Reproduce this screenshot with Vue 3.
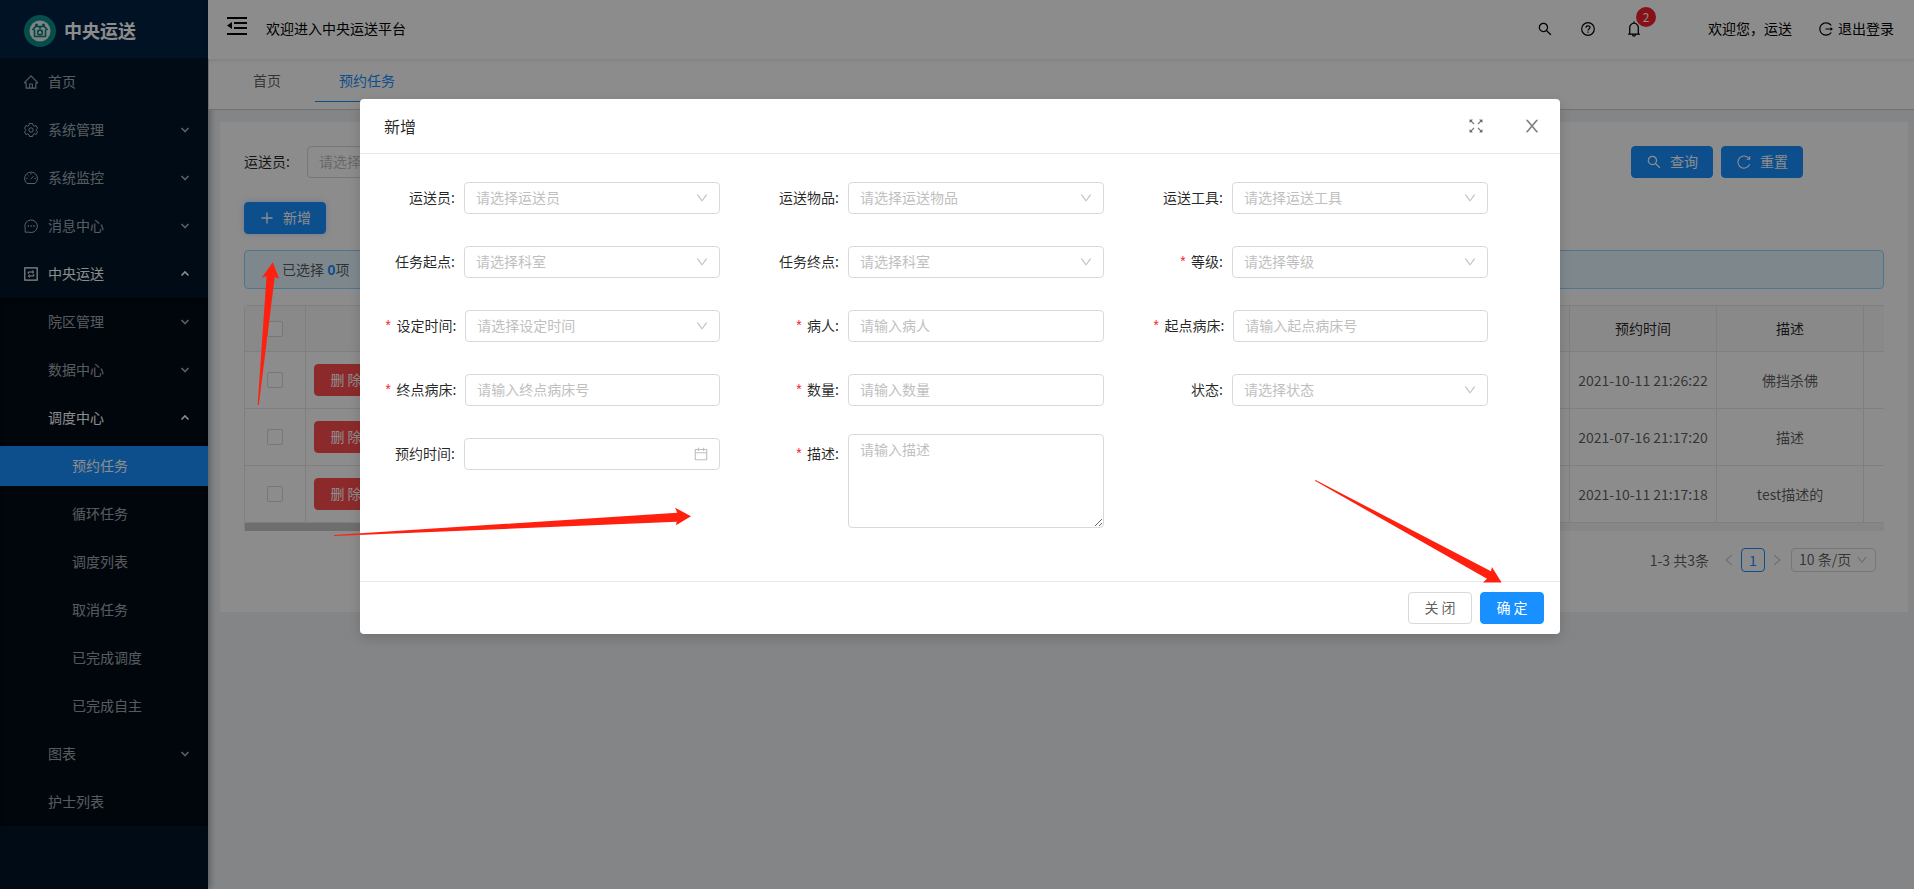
<script setup>
const icons = {
  search: 'M909.6 854.5L649.9 594.8C690.2 542.7 712 479 712 412c0-80.2-31.3-155.4-87.9-212.1-56.6-56.7-132-87.9-212.1-87.9s-155.5 31.3-212.1 87.9C143.2 256.5 112 331.8 112 412c0 80.1 31.3 155.5 87.9 212.1C256.5 680.8 331.8 712 412 712c67 0 130.6-21.8 182.7-62l259.7 259.6a8.2 8.2 0 0 0 11.6 0l43.6-43.5a8.2 8.2 0 0 0 0-11.6zM570.4 570.4C528 612.7 471.8 636 412 636s-116-23.3-158.4-65.6C211.3 528 188 471.8 188 412s23.3-116.1 65.6-158.4C296 211.3 352.2 188 412 188s116.1 23.2 158.4 65.6S636 352.2 636 412s-23.3 116.1-65.6 158.4z',
  down: 'M884 256h-75c-5.1 0-9.9 2.5-12.9 6.6L512 654.2 227.9 262.6c-3-4.1-7.8-6.6-12.9-6.6h-75c-6.5 0-10.3 7.4-6.5 12.7l352.6 486.1c12.8 17.6 39 17.6 51.7 0l352.6-486.1c3.9-5.3.1-12.7-6.4-12.7z',
  close: 'M563.8 512l262.5-312.9c4.4-5.2.7-13.1-6.1-13.1h-79.8c-4.7 0-9.2 2.1-12.3 5.7L511.6 449.8 295.1 191.7c-3-3.6-7.5-5.7-12.3-5.7H203c-6.8 0-10.5 7.9-6.1 13.1L459.4 512 196.9 824.9A7.95 7.95 0 0 0 203 838h79.8c4.7 0 9.2-2.1 12.3-5.7l216.5-258.1 216.5 258.1c3 3.6 7.5 5.7 12.3 5.7h79.8c6.8 0 10.5-7.9 6.1-13.1L563.8 512z',
  home: 'M946.5 505L560.1 118.8l-25.9-25.9a31.5 31.5 0 0 0-44.4 0L77.5 505a63.9 63.9 0 0 0-18.8 46c.4 35.2 29.7 63.3 64.9 63.3h42.5V940h691.8V614.3h43.4c17.1 0 33.2-6.7 45.3-18.8a63.6 63.6 0 0 0 18.7-45.3c0-17-6.7-33.1-18.8-45.2zM568 868H456V664h112v204zm217.9-325.7V868H632V640c0-22.1-17.9-40-40-40H432c-22.1 0-40 17.9-40 40v228H238.1V542.3h-96l370-369.7 23.1 23.1L882 542.3h-96.1z',
  calendar: 'M880 184H712v-64c0-4.4-3.6-8-8-8h-56c-4.4 0-8 3.6-8 8v64H384v-64c0-4.4-3.6-8-8-8h-56c-4.4 0-8 3.6-8 8v64H144c-17.7 0-32 14.3-32 32v664c0 17.7 14.3 32 32 32h736c17.7 0 32-14.3 32-32V216c0-17.7-14.3-32-32-32zm-40 656H184V460h656v380zM184 392V256h128v48c0 4.4 3.6 8 8 8h56c4.4 0 8-3.6 8-8v-48h256v48c0 4.4 3.6 8 8 8h56c4.4 0 8-3.6 8-8v-48h128v136H184z',
  bell: 'M816 768h-24V428c0-141.1-104.3-257.8-240-277.2V112c0-22.1-17.9-40-40-40s-40 17.9-40 40v38.8C336.3 170.2 232 286.9 232 428v340h-24c-17.7 0-32 14.3-32 32v32c0 4.4 3.6 8 8 8h216c0 61.8 50.2 112 112 112s112-50.2 112-112h216c4.4 0 8-3.6 8-8v-32c0-17.7-14.3-32-32-32zM512 888c-26.5 0-48-21.5-48-48h96c0 26.5-21.5 48-48 48zM304 768V428c0-55.6 21.6-107.8 60.9-147.1S456.4 220 512 220c55.6 0 107.8 21.6 147.1 60.9S720 372.4 720 428v340H304z',
  logout: 'M868 732h-70.3c-4.8 0-9.3 2.1-12.3 5.8-7 8.5-14.5 16.7-22.4 24.5a353.84 353.84 0 0 1-112.7 75.9A352.8 352.8 0 0 1 512.4 866c-47.9 0-94.3-9.4-137.9-27.8a353.84 353.84 0 0 1-112.7-75.9 353.28 353.28 0 0 1-76-112.5C167.3 606.2 158 559.9 158 512s9.4-94.2 27.8-137.8c17.8-42.1 43.4-80 76-112.5s70.5-58.1 112.7-75.9c43.6-18.4 90-27.8 137.9-27.8 47.9 0 94.3 9.3 137.9 27.8 42.2 17.8 80.1 43.4 112.7 75.9 7.9 7.9 15.3 16.1 22.4 24.5 3 3.7 7.6 5.8 12.3 5.8H868c6.3 0 10.2-7 6.7-12.3C798 160.5 663.8 81.6 511.3 82 271.7 82.6 79.6 277.1 82 516.4 84.4 751.9 276.2 942 512.4 942c152.1 0 285.7-78.8 362.3-197.7 3.4-5.3-.4-12.3-6.7-12.3zm88.9-226.3L815 393.7c-5.3-4.2-13-.4-13 6.3v76H488c-4.4 0-8 3.6-8 8v56c0 4.4 3.6 8 8 8h314v76c0 6.7 7.8 10.5 13 6.3l141.9-112a8 8 0 0 0 0-12.6z',
}

const menu = [
  { text: '首页', icon: 'home' },
  { text: '系统管理', icon: 'setting', arrow: 'down' },
  { text: '系统监控', icon: 'dashboard', arrow: 'down' },
  { text: '消息中心', icon: 'message', arrow: 'down' },
  { text: '中央运送', icon: 'transfer', arrow: 'up', open: true },
]

const subMenu = [
  { text: '院区管理', level: 2, arrow: 'down' },
  { text: '数据中心', level: 2, arrow: 'down' },
  { text: '调度中心', level: 2, arrow: 'up', open: true },
  { text: '预约任务', level: 3, selected: true },
  { text: '循环任务', level: 3 },
  { text: '调度列表', level: 3 },
  { text: '取消任务', level: 3 },
  { text: '已完成调度', level: 3 },
  { text: '已完成自主', level: 3 },
  { text: '图表', level: 2, arrow: 'down' },
  { text: '护士列表', level: 2 },
]

const chevron = { up: 'M1.5 5.5L5 2l3.500 3.500', down: 'M1.500 2L5 5.500 8.500 2' }

const rows = [
  { time: '2021-10-11 21:26:22', desc: '佛挡杀佛' },
  { time: '2021-07-16 21:17:20', desc: '描述' },
  { time: '2021-10-11 21:17:18', desc: 'test描述的' },
]

const fields = [
  { id: 'courier', label: '运送员', type: 'select', hint: '请选择运送员' },
  { id: 'goods', label: '运送物品', type: 'select', hint: '请选择运送物品' },
  { id: 'tool', label: '运送工具', type: 'select', hint: '请选择运送工具' },
  { id: 'from', label: '任务起点', type: 'select', hint: '请选择科室' },
  { id: 'to', label: '任务终点', type: 'select', hint: '请选择科室' },
  { id: 'grade', label: '等级', type: 'select', hint: '请选择等级', required: true },
  { id: 'settime', label: '设定时间', type: 'select', hint: '请选择设定时间', required: true },
  { id: 'patient', label: '病人', type: 'input', hint: '请输入病人', required: true },
  { id: 'frombed', label: '起点病床', type: 'input', hint: '请输入起点病床号', required: true },
  { id: 'tobed', label: '终点病床', type: 'input', hint: '请输入终点病床号', required: true },
  { id: 'amount', label: '数量', type: 'input', hint: '请输入数量', required: true },
  { id: 'status', label: '状态', type: 'select', hint: '请选择状态' },
  { id: 'booktime', label: '预约时间', type: 'date', hint: '' },
  { id: 'desc', label: '描述', type: 'textarea', hint: '请输入描述', required: true },
]
</script>

<template>
  <div class="app">
    <aside class="sider">
      <div class="logo">
        <svg class="logo-mark" viewBox="0 0 32 32" aria-hidden="true">
          <circle cx="16" cy="16" r="16" fill="#0a8f8a" />
          <circle cx="16" cy="16" r="10.5" fill="#e4eeee" />
          <g fill="none" stroke="#0a7f7a" stroke-width="1.6" stroke-linejoin="round">
            <path d="M10.500 14.500v7h11v-7M8.500 15l3-3.500h9l3 3.500" />
            <circle cx="16" cy="17.500" r="2.400" />
          </g>
          <g fill="#0a7f7a">
            <circle cx="12.500" cy="10" r="1.500" />
            <circle cx="19.500" cy="10" r="1.500" />
            <circle cx="16" cy="12.500" r="1.200" />
          </g>
        </svg>
        <h1>中央运送</h1>
      </div>
      <nav>
        <a v-for="m in menu" :key="m.text" href="#" class="item" :class="{ open: m.open }">
          <span v-if="m.icon === 'home'" class="slot"><svg class="ico lg" viewBox="0 0 1024 1024" fill="currentColor"><path :d="icons.home" /></svg></span>
          <svg v-else class="ico" viewBox="0 0 14 14" fill="none" stroke="currentColor">
            <template v-if="m.icon === 'setting'">
              <path stroke-linejoin="round" d="M5.5 .5h3l.5 1.800 1.300.8 1.800-.5 1.400 2.600-1.200 1.300v1l1.200 1.300-1.400 2.600-1.800-.5-1.300.8-.5 1.800h-3L5 11.700l-1.300-.8-1.800.5L.5 8.800l1.200-1.300v-1L.5 5.200l1.400-2.600 1.800.5L5 2.300z" />
              <circle cx="7" cy="7" r="2.200" />
            </template>
            <template v-else-if="m.icon === 'dashboard'">
              <path d="M3 12.500a6.400 6.400 0 1 1 8 0z" stroke-linejoin="round" />
              <path d="M6.600 8.200l3-3M7 2.200v1.300M2.200 7.400h1.300M10.500 7.400h1.300M3.600 4l.9.900" />
            </template>
            <template v-else-if="m.icon === 'message'">
              <path d="M1.200 13.200V9.500A6.300 6.300 0 1 1 5 13.200z" stroke-linejoin="round" />
              <path d="M3.600 7h1.300M6.400 7h1.300M9.200 7h1.300" stroke-width="1.300" />
            </template>
            <template v-else>
              <path d="M.8 .8h12.400v12.400H.8z" stroke-width="1.200" />
              <path d="M4.300 6.800V5h5.200M8.200 3.600L9.700 5 8.200 6.300M9.700 7.200V9H4.500M5.800 7.700L4.300 9l1.500 1.400" />
            </template>
          </svg>
          <span class="text">{{ m.text }}</span>
          <svg v-if="m.arrow" class="chev" viewBox="0 0 10 8"><path :d="chevron[m.arrow]" /></svg>
        </a>
        <div class="sub">
          <a
            v-for="m in subMenu"
            :key="m.text"
            href="#"
            class="item"
            :class="['level' + m.level, { open: m.open, selected: m.selected }]"
          >
            <span class="text">{{ m.text }}</span>
            <svg v-if="m.arrow" class="chev" viewBox="0 0 10 8"><path :d="chevron[m.arrow]" /></svg>
          </a>
        </div>
      </nav>
    </aside>

    <div class="main">
      <header class="header">
        <button class="fold" aria-label="收起菜单">
          <svg viewBox="0 0 20 18" fill="currentColor">
            <path d="M0 0h20v2H0zM7 5h13v2H7zM7 10h13v2H7zM0 16h20v2H0zM0 8.500L5 5v7z" />
          </svg>
        </button>
        <span class="welcome">欢迎进入中央运送平台</span>
        <div class="tools">
          <button class="tool" aria-label="搜索"><svg class="ico lg" viewBox="0 0 1024 1024" fill="currentColor"><path :d="icons.search" /></svg></button>
          <button class="tool" aria-label="帮助">
            <svg class="ico" viewBox="0 0 14 14" fill="none" stroke="currentColor" stroke-width="1.200">
              <circle cx="7" cy="7" r="6.300" />
              <path d="M5 5.700C5 3.300 9 3.300 9 5.600 9 7 7 7 7 8.500M7 9.600v1.200" />
            </svg>
          </button>
          <button class="tool bell" aria-label="通知">
            <svg class="ico xl" viewBox="0 0 1024 1024" fill="currentColor"><path :d="icons.bell" /></svg>
            <span class="badge">2</span>
          </button>
          <span class="user">欢迎您，运送</span>
          <a href="#" class="logout"><svg class="ico lg" viewBox="0 0 1024 1024" fill="currentColor"><path :d="icons.logout" /></svg>退出登录</a>
        </div>
      </header>

      <nav class="tabs">
        <a href="#" class="tab">首页</a>
        <a href="#" class="tab active">预约任务</a>
      </nav>

      <main class="content">
        <section class="card">
          <form class="search" @submit.prevent>
            <label for="q-courier">运送员:</label>
            <div class="control query">
              <select id="q-courier" class="box"><option>请选择运送员</option></select>
              <svg class="suffix" viewBox="0 0 1024 1024" fill="currentColor"><path :d="icons.down" /></svg>
            </div>
            <div class="search-actions">
              <button class="btn primary with-icon"><svg class="ico lg" viewBox="0 0 1024 1024" fill="currentColor"><path :d="icons.search" /></svg>查询</button>
              <button class="btn primary with-icon" type="reset">
                <svg class="ico lg" viewBox="-1 -1 16 16" fill="none" stroke="currentColor" stroke-width="1.100"><path d="M12.700 9.300A6.100 6.100 0 1 1 12 3.500M12.700 1.200v3h-3" /></svg>重置
              </button>
            </div>
          </form>

          <button class="btn primary with-icon glow">
            <svg class="ico lg" viewBox="-1 -1 16 16" fill="none" stroke="currentColor" stroke-width="1.400"><path d="M7 1.500v11M1.500 7h11" /></svg>新增
          </button>

          <div class="alert">已选择&nbsp;<b>0</b>项</div>

          <div class="table-wrap">
            <table>
              <colgroup>
                <col class="c-check" /><col /><col class="c-data" /><col class="c-data" /><col class="c-rest" />
              </colgroup>
              <thead>
                <tr>
                  <th><input type="checkbox" aria-label="全选" /></th>
                  <th></th>
                  <th>预约时间</th>
                  <th>描述</th>
                  <th></th>
                </tr>
              </thead>
              <tbody>
                <tr v-for="r in rows" :key="r.time">
                  <td><input type="checkbox" aria-label="选择" /></td>
                  <td class="ops"><button class="btn danger">删 除</button></td>
                  <td>{{ r.time }}</td>
                  <td>{{ r.desc }}</td>
                  <td></td>
                </tr>
              </tbody>
            </table>
            <div class="scroll"><div class="thumb"></div></div>
          </div>

          <div class="pager">
            <span>1-3 共3条</span>
            <button class="step" aria-label="上一页"><svg viewBox="0 0 8 12"><path d="M7 1L1 6l6 5" /></svg></button>
            <button class="page">1</button>
            <button class="step" aria-label="下一页"><svg viewBox="0 0 8 12"><path d="M1 1l6 5-6 5" /></svg></button>
            <div class="control size">
              <select class="box" aria-label="每页条数"><option>10 条/页</option></select>
              <svg class="suffix" viewBox="0 0 1024 1024" fill="currentColor"><path :d="icons.down" /></svg>
            </div>
          </div>
        </section>
      </main>
    </div>

    <div class="mask">
      <div class="modal" role="dialog" aria-labelledby="dlg-title">
        <div class="modal-head">
          <h2 id="dlg-title">新增</h2>
          <button aria-label="全屏">
            <svg viewBox="0 0 14 14" fill="none" stroke="currentColor" stroke-width="1.300">
              <path d="M5 5L1.500 1.500M9 5l3.500-3.500M5 9l-3.500 3.500M9 9l3.500 3.500" />
              <path fill="currentColor" stroke="none" d="M.5 .5h3.500L.5 4zM13.500 .5V4L10 .5zM.5 13.500V10L4 13.500zM13.500 13.500H10l3.500-3.500z" />
            </svg>
          </button>
          <button aria-label="关闭窗口"><svg class="x" viewBox="0 0 1024 1024" fill="currentColor"><path :d="icons.close" /></svg></button>
        </div>
        <form class="modal-body" @submit.prevent>
          <div v-for="f in fields" :key="f.id" class="field">
            <label :for="f.id"><i v-if="f.required">*</i>{{ f.label }}:</label>
            <div class="control">
              <template v-if="f.type === 'select'">
                <select :id="f.id" class="box"><option>{{ f.hint }}</option></select>
                <svg class="suffix" viewBox="0 0 1024 1024" fill="currentColor"><path :d="icons.down" /></svg>
              </template>
              <textarea v-else-if="f.type === 'textarea'" :id="f.id" class="box" :placeholder="f.hint"></textarea>
              <template v-else>
                <input :id="f.id" type="text" class="box" :placeholder="f.hint" />
                <svg v-if="f.type === 'date'" class="suffix cal" viewBox="0 0 1024 1024" fill="currentColor"><path :d="icons.calendar" /></svg>
              </template>
            </div>
          </div>
        </form>
        <div class="modal-foot">
          <button class="btn">关 闭</button>
          <button class="btn primary">确 定</button>
        </div>
      </div>
    </div>

    <svg class="marks" aria-hidden="true" fill="#ff2010">
      <path d="M272.700 262.300L261.700 278l4.800-2L257.700 405h1.100L274.700 277l4.500 1.700z" />
      <path d="M691 516.300L675 507.700l2.300 5L334 535v1l342.700-14.300-.7 3.600z" />
      <path d="M1501.600 582.600L1491.900 567l-.9 4.200L1315.500 479.900l-.6.900L1487 578.700l-4 3.900z" />
    </svg>
  </div>
</template>

<style>
body {
  margin: 0;
}
</style>

<style scoped>
.app {
  position: relative;
  display: flex;
  min-height: 100vh;
  overflow: hidden;
  background: #f0f2f5;
  color: rgba(0, 0, 0, 0.65);
  font: 14px/21px "Noto Sans CJK SC", "Liberation Sans", sans-serif;
}
* {
  box-sizing: border-box;
}
a {
  color: inherit;
  text-decoration: none;
}
button,
input,
select,
textarea {
  margin: 0;
  font: inherit;
  color: inherit;
}
button {
  padding: 0;
  border: 0;
  background: none;
}
svg {
  display: block;
  flex: none;
}
.ico {
  width: 14px;
  height: 14px;
}
.lg {
  width: 16px;
  height: 16px;
}
.xl {
  width: 18px;
  height: 18px;
}

/* Side menu */
.sider {
  flex: none;
  width: 208px;
  background: #001529;
  box-shadow: 2px 0 6px rgba(0, 21, 41, 0.35);
}
.sider nav {
  padding-top: 4px;
}
.logo {
  display: flex;
  align-items: center;
  gap: 8px;
  height: 58px;
  padding: 4px 24px 0;
  background: #002140;
}
.logo-mark {
  width: 32px;
  height: 32px;
}
.logo h1 {
  margin: 0;
  padding-bottom: 2px;
  color: #fff;
  font-size: 18px;
  line-height: 24px;
}
.item {
  display: flex;
  align-items: center;
  gap: 10px;
  height: 40px;
  margin: 8px 0;
  padding: 0 18px 0 24px;
  color: rgba(255, 255, 255, 0.65);
}
.sider nav > .item:first-child {
  margin-top: 0;
}
.text {
  padding-bottom: 2px;
}
.slot {
  display: flex;
  justify-content: center;
  width: 14px;
}
.open,
.selected {
  color: #fff;
}
.selected {
  background: #1890ff;
}
.chev {
  width: 10px;
  height: 8px;
  margin-left: auto;
  fill: none;
  stroke: currentColor;
  stroke-width: 1.6;
}
.sub {
  display: flow-root;
  margin-top: -4px;
  background: #000c17;
  box-shadow: inset 0 2px 8px rgba(0, 0, 0, 0.45);
}
.sub .item:first-child {
  margin-top: 4px;
}
.sub .item:last-child {
  margin-bottom: 4px;
}
.level2 {
  padding-left: 48px;
}
.level3 {
  padding-left: 72px;
}

/* Top bar */
.main {
  flex: 1;
  min-width: 0;
}
.header {
  position: relative;
  display: flex;
  align-items: center;
  height: 59px;
  padding: 0 20px 2px 19px;
  background: #fff;
  box-shadow: 0 1px 4px rgba(0, 21, 41, 0.12);
  color: #000;
  z-index: 1;
}
.fold {
  padding-bottom: 5px;
}
.fold svg {
  width: 20px;
  height: 18px;
}
.welcome {
  margin-left: 19px;
}
.tools {
  display: flex;
  align-items: center;
  margin-left: auto;
}
.tool {
  margin-right: 28px;
}
.bell {
  position: relative;
  margin: 0 65px 0 2px;
}
.badge {
  position: absolute;
  top: -13px;
  left: 11px;
  width: 20px;
  height: 20px;
  border-radius: 10px;
  background: #f5222d;
  color: #fff;
  font-size: 12px;
  line-height: 20px;
  text-align: center;
}
.logout {
  display: flex;
  align-items: center;
  gap: 4px;
  margin-left: 26px;
}
.tabs {
  position: relative;
  display: flex;
  align-items: flex-start;
  gap: 10px;
  height: 51px;
  padding-left: 20px;
  border-bottom: 1px solid #ccc;
  border-left: 1px solid #ccc;
  background: #fff;
}
.tab {
  padding: 11px 24px 10px;
  border-bottom: 1px solid transparent;
}
.active {
  border-color: #1890ff;
  color: #1890ff;
}

/* Page card */
.content {
  padding: 12px 6px 0 12px;
}
.card {
  padding: 24px 24px 40px;
  background: #fff;
}
.search {
  display: flex;
  align-items: center;
  margin-bottom: 24px;
  color: rgba(0, 0, 0, 0.85);
}
.search label {
  padding-bottom: 2px;
}
.query {
  width: 256px;
  margin-left: 17px;
}
.search-actions {
  display: flex;
  gap: 8px;
  margin: 0 81px 0 auto;
}
.btn {
  display: inline-flex;
  align-items: center;
  justify-content: center;
  gap: 8px;
  min-width: 64px;
  height: 32px;
  padding: 0 15px 1px;
  border: 1px solid #d9d9d9;
  border-radius: 4px;
  background: #fff;
}
.with-icon {
  padding: 0 14px 1px;
}
.primary {
  border-color: #1890ff;
  background: #1890ff;
  color: #fff;
}
.danger {
  border-color: #ff4d4f;
  background: #ff4d4f;
  color: #fff;
}
.glow {
  box-shadow: 0 0 6px rgba(24, 100, 255, 0.25);
}
.alert {
  display: flex;
  align-items: center;
  height: 39px;
  margin: 16px 0;
  padding-left: 37px;
  border: 1px solid #91d5ff;
  border-radius: 4px;
  background: #e6f7ff;
}
.alert b {
  color: #1890ff;
}
.table-wrap {
  overflow: hidden;
  border-left: 1px solid #e8e8e8;
  border-radius: 4px 0 0 0;
}
table {
  width: 100%;
  border-collapse: separate;
  border-spacing: 0;
  table-layout: fixed;
}
.c-check {
  width: 61px;
}
.c-data {
  width: 147px;
}
.c-rest {
  width: 20px;
}
th,
td {
  height: 57px;
  padding: 0;
  border-right: 1px solid #e8e8e8;
  border-bottom: 1px solid #e8e8e8;
  text-align: center;
  white-space: nowrap;
}
th {
  height: 47px;
  border-top: 1px solid #e8e8e8;
  background: #fafafa;
  color: rgba(0, 0, 0, 0.85);
  font-weight: 400;
}
th:last-child,
td:last-child {
  border-right: 0;
}
.ops {
  padding-left: 8px;
  text-align: left;
}
input[type="checkbox"] {
  display: block;
  width: 16px;
  height: 16px;
  margin: 0 auto;
  appearance: none;
  border: 1px solid #d9d9d9;
  border-radius: 2px;
  background: #fff;
}
.scroll {
  height: 8px;
  background: #f5f5f5;
}
.thumb {
  width: 50%;
  height: 8px;
  background: #c8c8c8;
}
.pager {
  display: flex;
  align-items: center;
  justify-content: flex-end;
  height: 24px;
  margin: 17px 8px 0 0;
}
.step {
  display: flex;
  justify-content: center;
  width: 24px;
}
.step svg {
  width: 8px;
  height: 12px;
  fill: none;
  stroke: rgba(0, 0, 0, 0.3);
}
.pager span {
  margin-right: 8px;
}
.page {
  width: 24px;
  height: 24px;
  border: 1px solid #1890ff;
  border-radius: 4px;
  color: #1890ff;
}
.size {
  width: 85px;
  margin-left: 2px;
}

/* Form controls */
.control {
  position: relative;
}
.box {
  display: block;
  width: 100%;
  height: 32px;
  padding: 3px 11px 5px;
  appearance: none;
  border: 1px solid #d9d9d9;
  border-radius: 4px;
  outline: 0;
  background: #fff;
  color: #bfbfbf;
}
.box::placeholder {
  color: #bfbfbf;
  opacity: 1;
}
.suffix {
  position: absolute;
  top: 9px;
  right: 11px;
  width: 14px;
  height: 14px;
  color: rgba(0, 0, 0, 0.25);
  pointer-events: none;
}
.size .box {
  height: 24px;
  padding: 0 7px 1px;
  color: rgba(0, 0, 0, 0.65);
}
.size .suffix {
  top: 6px;
  right: 8px;
  width: 12px;
  height: 12px;
}

/* Dialog */
.mask {
  position: absolute;
  inset: 0;
  z-index: 2;
  display: flex;
  align-items: flex-start;
  justify-content: center;
  padding: 99px 0 0 6px;
  background: rgba(0, 0, 0, 0.45);
}
.modal {
  width: 1200px;
  border-radius: 4px;
  background: #fff;
  box-shadow: 0 4px 12px rgba(0, 0, 0, 0.15);
}
.modal-head {
  display: flex;
  align-items: center;
  height: 55px;
  padding: 0 18px 0 24px;
  border-bottom: 1px solid #e8e8e8;
}
.modal-head h2 {
  flex: 1;
  margin: 0;
  color: rgba(0, 0, 0, 0.85);
  font-size: 16px;
  font-weight: 400;
  line-height: 22px;
}
.modal-head button {
  color: rgba(0, 0, 0, 0.5);
}
.modal-head svg {
  width: 14px;
  height: 14px;
}
.modal-head .x {
  width: 20px;
  height: 20px;
  margin-left: 39px;
}
.modal-body {
  display: grid;
  grid-template-columns: repeat(3, 1fr);
  row-gap: 24px;
  padding: 24px 24px 53px;
}
.field {
  display: grid;
  grid-template-columns: 5fr 16fr 3fr;
  align-items: start;
}
.field label {
  height: 40px;
  padding-right: 9px;
  color: rgba(0, 0, 0, 0.85);
  line-height: 38px;
  text-align: right;
  white-space: nowrap;
}
.field i {
  margin-right: 4px;
  color: #f5222d;
  font-family: "Liberation Mono", monospace;
  font-style: normal;
  line-height: 1;
}
.field .control {
  padding: 4px 0;
}
.field .control:has(textarea) {
  padding: 0;
}
.field .suffix {
  top: 13px;
}
.field .cal {
  top: 12px;
  width: 16px;
  height: 16px;
}
textarea.box {
  height: 94px;
  padding-top: 4px;
  resize: vertical;
}
.modal-foot {
  display: flex;
  justify-content: flex-end;
  gap: 8px;
  padding: 10px 16px;
  border-top: 1px solid #e8e8e8;
}
.marks {
  position: absolute;
  inset: 0;
  z-index: 3;
  width: 100%;
  height: 100%;
  pointer-events: none;
}
</style>
